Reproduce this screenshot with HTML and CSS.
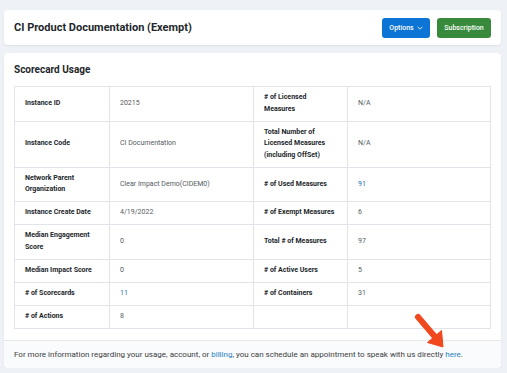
FILE: index.html
```html
<!DOCTYPE html>
<html lang="en">
<head>
<meta charset="utf-8">
<title>CI Product Documentation</title>
<link rel="stylesheet" href="styles.css">
</head>
<body>
<div class="page">
  <header class="card header">
    <h1 class="title">CI Product Documentation (Exempt)</h1>
    <div class="actions">
      <button class="btn btn-blue">Options <svg class="chev" viewBox="0 0 10 6" width="6" height="4"><path d="M1 1l4 4 4-4" fill="none" stroke="#fff" stroke-width="1.4"/></svg></button>
      <button class="btn btn-green">Subscription</button>
    </div>
  </header>

  <section class="card usage">
    <h2 class="subtitle">Scorecard Usage</h2>
    <table class="grid">
      <colgroup>
        <col class="c1"><col class="c2"><col class="c3"><col class="c4">
      </colgroup>
      <tr><th>Instance ID</th><td>20215</td><th># of Licensed Measures</th><td>N/A</td></tr>
      <tr><th>Instance Code</th><td>CI Documentation</td><th>Total Number of Licensed Measures (including OffSet)</th><td>N/A</td></tr>
      <tr><th>Network Parent Organization</th><td>Clear Impact Demo(CIDEM0)</td><th># of Used Measures</th><td class="link">91</td></tr>
      <tr><th>Instance Create Date</th><td>4/19/2022</td><th># of Exempt Measures</th><td>6</td></tr>
      <tr><th>Median Engagement Score</th><td>0</td><th>Total # of Measures</th><td>97</td></tr>
      <tr><th>Median Impact Score</th><td>0</td><th># of Active Users</th><td>5</td></tr>
      <tr><th># of Scorecards</th><td class="link">11</td><th># of Containers</th><td>31</td></tr>
      <tr><th># of Actions</th><td>8</td><th></th><td></td></tr>
    </table>
    <p class="foot">For more information regarding your usage, account, or <a class="lnk">billing</a>, you can schedule an appointment to speak with us directly <a class="lnk">here</a>.</p>
    <svg class="arrow" viewBox="0 0 40 45" width="40" height="45">
      <path d="M8 7 L26 28" stroke="#f1491d" stroke-width="6" stroke-linecap="round" fill="none"/>
      <path d="M33 37 L17.5 32.5 L31.5 20.5 Z" fill="#f1491d" stroke="#f1491d" stroke-width="1" stroke-linejoin="round"/>
    </svg>
  </section>
</div>
</body>
</html>
```

FILE: styles.css
```css
* { box-sizing: border-box; }
html, body { margin: 0; padding: 0; }
body {
  background: #eef1f5;
  font-family: Roboto, "Liberation Sans", sans-serif;
  color: #212529;
}
.page {
  padding: 10px 6px 0 4px;
  display: flex;
  flex-direction: column;
  gap: 8px;
}
.card {
  background: #fff;
  border-radius: 4px;
  box-shadow: 0 1px 2px rgba(0,0,0,0.08);
}
.header {
  height: 35px;
  display: flex;
  align-items: center;
  justify-content: space-between;
  padding: 0 10px;
}
.title {
  margin: 0;
  font-size: 11px;
  font-weight: 700;
  color: #23272b;
}
.actions { display: flex; gap: 7px; }
.btn {
  height: 20px;
  border: 0;
  border-radius: 3px;
  color: #fff;
  font-family: Roboto, sans-serif;
  font-size: 7px;
  font-weight: 500;
  padding: 0;
  display: flex;
  align-items: center;
  justify-content: center;
  gap: 3px;
}
.btn-blue { background: #0b74d4; width: 48px; }
.btn-green { background: #378a3c; width: 54px; }
.chev { display: block; }
.usage {
  position: relative;
  padding-top: 11px;
}
.subtitle {
  margin: 0 0 10px 10px;
  font-size: 10px;
  line-height: 12px;
  font-weight: 700;
  color: #23272b;
}
.grid {
  margin: 0 11px 0 10px;
  width: 476px;
  border-collapse: collapse;
  table-layout: fixed;
}
.c1 { width: 95px; }
.c2 { width: 144px; }
.c3 { width: 94px; }
.c4 { width: 143px; }
.grid th, .grid td {
  border: 1px solid #e1e4e8;
  padding: 5.25px 10px;
  font-size: 7px;
  line-height: 11.5px;
  text-align: left;
  vertical-align: middle;
}
.grid th { font-weight: 700; color: #1c1f2a; }
.grid td { color: #555a60; }
.grid td.link { color: #1d6fb8; }
.foot {
  margin: 11px 0 0;
  border-top: 1px solid #e6e8eb;
  background: #fafbfc;
  line-height: 27px;
  padding: 0 10px;
  font-size: 8px;
  color: #3a3d42;
  border-radius: 0 0 4px 4px;
  white-space: nowrap;
}
.lnk { color: #1d7fc0; }
.arrow {
  position: absolute;
  left: 406px;
  top: 257px;
}
```
